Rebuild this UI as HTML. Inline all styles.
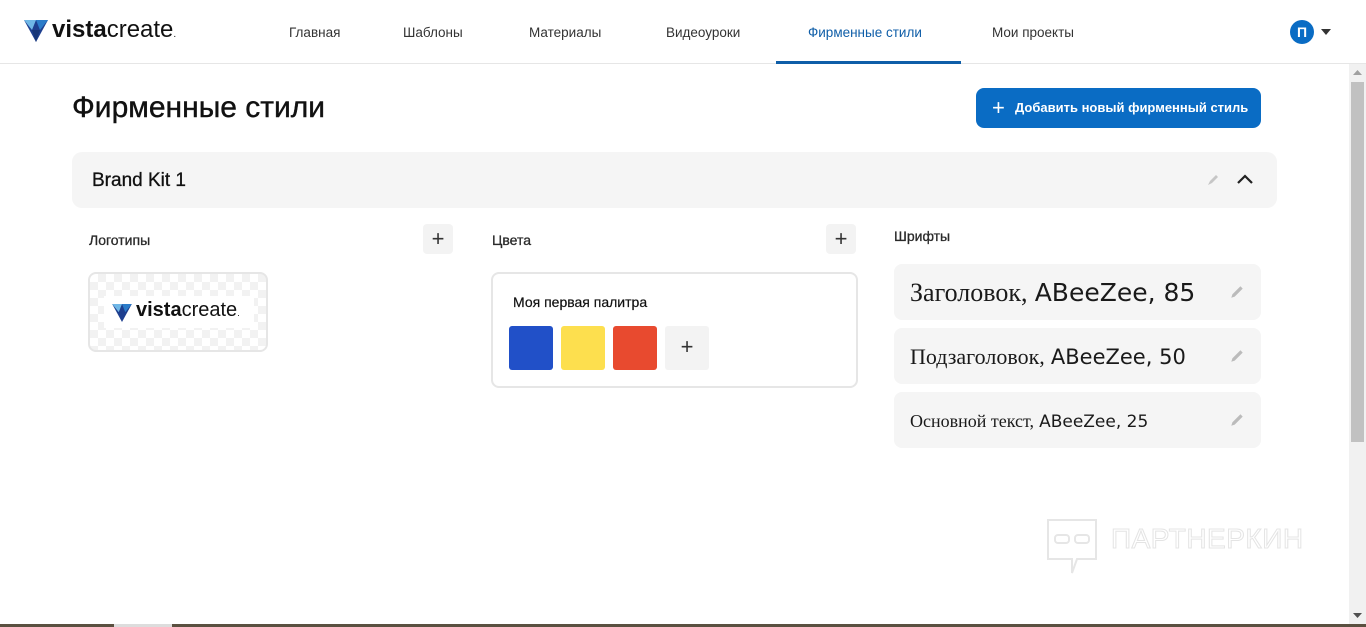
<!DOCTYPE html>
<html><head><meta charset="utf-8"><style>
*{box-sizing:border-box;margin:0;padding:0}
body{width:1366px;height:627px;overflow:hidden;background:#fff;font-family:"Liberation Sans",sans-serif;color:#1a1a1a;position:relative}
.hdr{position:absolute;left:0;top:0;width:1366px;height:64px;border-bottom:1px solid #e6e6e6;background:#fff}
.nav{position:absolute;top:25px;font-size:13.5px;color:#333}
.abs{position:absolute}
.ub{position:absolute;top:24px;font-size:13px;color:#2a2a2a}
.btn{position:absolute;left:976px;top:88px;width:285px;height:40px;background:#0a6cc4;border-radius:8px;color:#fff;font-weight:bold;font-size:13px;line-height:40px;padding-left:39px}
.kit{position:absolute;left:72px;top:152px;width:1205px;height:56px;background:#f5f5f5;border-radius:10px}
.sq{position:absolute;width:30px;height:30px;background:#f3f3f3;border-radius:4px;font-size:22px;text-align:center;line-height:29px;color:#333}
.font{position:absolute;left:894px;width:367px;height:56px;background:#f5f5f5;border-radius:8px}
.font span.s{font-family:"Liberation Serif",serif}
.font span.d{font-family:"DejaVu Sans",sans-serif}
.pen{position:absolute;right:16px;top:20px}
.sw{position:absolute;top:326px;width:44px;height:44px;border-radius:3px}
</style></head><body>
<div class="hdr">
  <svg class="abs" style="left:24px;top:20px" width="24" height="22" viewBox="0 0 24 22"><polygon points="0,0 24,0 12,22" fill="#1e3f8f"/><polygon points="0,0 12,0 8,10" fill="#6fb7e6"/><polygon points="12,0 24,0 16,10" fill="#2b7cc9"/><polygon points="8,10 16,10 12,22" fill="#163577"/></svg>
  <div class="abs" style="left:52px;top:16px;font-size:24px;letter-spacing:0;color:#111"><b>vista</b>create<span style="font-size:10px">.</span></div>
  <div class="nav" style="left:289px">Главная</div>
  <div class="nav" style="left:403px">Шаблоны</div>
  <div class="nav" style="left:529px">Материалы</div>
  <div class="nav" style="left:666px">Видеоуроки</div>
  <div class="nav" style="left:808px;color:#0f5ea8">Фирменные стили</div>
  <div class="nav" style="left:992px">Мои проекты</div>
  <div class="abs" style="left:776px;top:61px;width:185px;height:3px;background:#0f5ea8"></div>
  <div class="abs" style="left:1290px;top:20px;width:24px;height:24px;border-radius:50%;background:#0a6cc4;color:#fff;font-size:14px;text-align:center;line-height:24px;font-weight:bold">П</div>
  <svg class="abs" style="left:1321px;top:29px" width="10" height="6"><polygon points="0,0 10,0 5,6" fill="#333"/></svg>
</div>
<div class="abs" style="left:1349px;top:64px;width:17px;height:563px;background:#f1f1f1"></div>
<div class="abs" style="left:1351px;top:82px;width:13px;height:360px;background:#c1c1c1"></div>
<svg class="abs" style="left:1353px;top:70px" width="9" height="5"><polygon points="0,5 9,5 4.5,0" fill="#a0a0a0"/></svg>
<svg class="abs" style="left:1353px;top:613px" width="9" height="5"><polygon points="0,0 9,0 4.5,5" fill="#505050"/></svg>
<div class="abs" style="left:0;top:624px;width:1366px;height:3px;background:#5a5040"></div>
<div class="abs" style="left:114px;top:624px;width:58px;height:3px;background:#ddd"></div>

<div class="abs" style="left:72px;top:91px;font-size:30px;color:#111;-webkit-text-stroke:0.4px #111">Фирменные стили</div>
<div class="btn"><span class="abs" style="left:16px;top:0;font-size:22px;font-weight:normal">+</span>Добавить новый фирменный стиль</div>

<div class="kit">
  <div class="abs" style="left:20px;top:18px;font-size:19px;color:#111;-webkit-text-stroke:0.3px #111">Brand Kit 1</div>
  <svg class="abs" style="left:1134px;top:21px" width="14" height="14" viewBox="0 0 14 14"><path d="M2 12 L4 8 L10 2 L12 4 L6 10 Z" fill="#c6c6c6"/></svg>
  <svg class="abs" style="left:1164px;top:21px" width="18" height="12" viewBox="0 0 18 12"><path d="M2 10 L9 3 L16 10" stroke="#222" stroke-width="2.2" fill="none"/></svg>
</div>

<div class="ub" style="left:89px;top:232px;font-size:14px;-webkit-text-stroke:0.3px #2a2a2a">Логотипы</div>
<div class="sq" style="left:423px;top:224px">+</div>
<div class="abs" style="left:88px;top:272px;width:180px;height:80px;border:2px solid #e6e6e6;border-radius:8px;background:#fafafa;background-image:repeating-conic-gradient(#f2f2f2 0 25%,#fff 0 50%);background-size:16px 16px"></div>
<div class="abs" style="left:104px;top:296px;width:150px;height:32px;background:#fff"></div>
<svg class="abs" style="left:112px;top:304px" width="20" height="18" viewBox="0 0 24 22"><polygon points="0,0 24,0 12,22" fill="#1e3f8f"/><polygon points="0,0 12,0 8,10" fill="#6fb7e6"/><polygon points="12,0 24,0 16,10" fill="#2b7cc9"/></svg>
<div class="abs" style="left:136px;top:299px;font-size:20px;letter-spacing:0;color:#111"><b>vista</b>create<span style="font-size:9px">.</span></div>

<div class="ub" style="left:492px;top:232px;font-size:14px;-webkit-text-stroke:0.3px #2a2a2a">Цвета</div>
<div class="sq" style="left:826px;top:224px">+</div>
<div class="abs" style="left:491px;top:272px;width:367px;height:116px;border:2px solid #e6e6e6;border-radius:8px"></div>
<div class="abs" style="left:513px;top:294px;font-size:14px;color:#111;-webkit-text-stroke:0.2px #111">Моя первая палитра</div>
<div class="sw" style="left:509px;background:#2150c8"></div>
<div class="sw" style="left:561px;background:#fddf4e"></div>
<div class="sw" style="left:613px;background:#e84a2f"></div>
<div class="sw" style="left:665px;background:#f3f3f3;font-size:22px;text-align:center;line-height:42px;color:#333">+</div>

<div class="ub" style="left:894px;top:228px;font-size:14px;-webkit-text-stroke:0.3px #2a2a2a">Шрифты</div>
<div class="font" style="top:264px"><div class="abs" style="left:16px;top:13px;font-size:26px"><span class="s">Заголовок,</span> <span class="d" style="font-size:25px">ABeeZee, 85</span></div>
<svg class="pen" width="16" height="16" viewBox="0 0 14 14"><path d="M2 12 L3 9 L10 2 L12 4 L5 11 Z" fill="#bbb"/></svg></div>
<div class="font" style="top:328px"><div class="abs" style="left:16px;top:16px;font-size:22px"><span class="s">Подзаголовок,</span> <span class="d" style="font-size:21px">ABeeZee, 50</span></div>
<svg class="pen" width="16" height="16" viewBox="0 0 14 14"><path d="M2 12 L3 9 L10 2 L12 4 L5 11 Z" fill="#bbb"/></svg></div>
<div class="font" style="top:392px"><div class="abs" style="left:16px;top:19px;font-size:18px"><span class="s">Основной текст,</span> <span class="d" style="font-size:17px">ABeeZee, 25</span></div>
<svg class="pen" width="16" height="16" viewBox="0 0 14 14"><path d="M2 12 L3 9 L10 2 L12 4 L5 11 Z" fill="#bbb"/></svg></div>

<svg class="abs" style="left:1045px;top:517px" width="54" height="58" viewBox="0 0 54 58"><path d="M3 3 H51 V42 H32 L27 56 V42 H3 Z" fill="none" stroke="#e6e6e6" stroke-width="2"/><rect x="10" y="18" width="14" height="8" rx="3" fill="none" stroke="#e6e6e6" stroke-width="2"/><rect x="30" y="18" width="14" height="8" rx="3" fill="none" stroke="#e6e6e6" stroke-width="2"/></svg>
<div class="abs" style="left:1111px;top:523px;font-size:28px;color:#fff;-webkit-text-stroke:1px #e4e4e4;letter-spacing:0.5px">ПАРТНЕРКИН</div>
</body></html>
